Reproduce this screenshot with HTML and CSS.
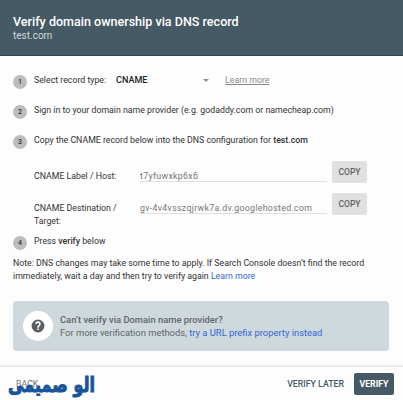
FILE: index.html
```html
<!DOCTYPE html>
<html lang="en">
<head>
<meta charset="UTF-8" />
<meta name="viewport" content="width=device-width, initial-scale=1" />
<title>Verify domain ownership</title>
<link rel="stylesheet" href="styles.css">
</head>
<body>

<div class="dialog">
  <header class="dialog-header">
    <h1>Verify domain ownership via DNS record</h1>
    <p>test.com</p>
  </header>

  <main class="content">
    <ol class="steps">
      <li class="step">
        <span class="num">1</span>
        <span class="record-label">Select record type:</span>
        <span class="record-type">CNAME</span>
        <a class="help-link" href="#">Learn more</a>
      </li>
      <li class="step"><span class="num">2</span><span>Sign in to your domain name provider (e.g. godaddy.com or namecheap.com)</span></li>
      <li class="step"><span class="num">3</span><span>Copy the CNAME record below into the DNS configuration for <b>test.com</b></span></li>
    </ol>

    <div class="record">
      <span class="record-name">CNAME Label / Host:</span>
      <span class="record-value">t7yfuwxkp6x6</span>
      <button class="copy">COPY</button>
    </div>
    <div class="record">
      <span class="record-name">CNAME Destination / Target:</span>
      <span class="record-value">gv-4v4vsszqjrwk7a.dv.googlehosted.com</span>
      <button class="copy">COPY</button>
    </div>

    <div class="step last"><span class="num">4</span><span>Press <b>verify</b> below</span></div>

    <p class="note">Note: DNS changes may take some time to apply. If Search Console doesn’t find the record<br>immediately, wait a day and then try to verify again <a href="#">Learn more</a></p>

    <section class="tip">
      <div class="tip-icon">
        <svg width="14" height="14" viewBox="0 0 24 24"><path fill="#5c5f61" d="M12 1a11 11 0 1 0 0 22 11 11 0 0 0 0-22zm1.4 18h-2.8v-2.8h2.8zm2.3-7.8-1.1 1.1c-.8.8-1.2 1.4-1.2 2.7h-2.8v-.7c0-1.1.4-2.1 1.2-2.9l1.4-1.4c.4-.4.6-.8.6-1.4a1.8 1.8 0 0 0-3.6 0H7.4a4.6 4.6 0 0 1 9.2 0c0 1-.3 1.9-.9 2.6z"/></svg>
      </div>
      <div class="tip-text">
        <b>Can’t verify via Domain name provider?</b>
        <p>For more verification methods, <a href="#">try a URL prefix property instead</a></p>
      </div>
    </section>
  </main>

  <footer class="actions">
    <button class="back">BACK</button>
    <button class="later">VERIFY LATER</button>
    <button class="verify">VERIFY</button>
    <svg class="brand" width="96" height="34" viewBox="0 0 96 34">
      <text x="91" y="25" textLength="87" lengthAdjust="spacingAndGlyphs" direction="rtl">الو صمیمی</text>
    </svg>
  </footer>
</div>

</body>
</html>
```

FILE: styles.css
```css
* {
  box-sizing: border-box;
}

body {
  margin: 0;
  font-family: Roboto, "Liberation Sans", sans-serif;
  font-size: 8.77px;
  line-height: 13px;
  color: #323232;
  background: #fdfdfd;
}

h1, p, ol {
  margin: 0;
  padding: 0;
}

b {
  font-weight: 500;
}

a {
  color: #3367d6;
  text-decoration: none;
}

button {
  border: 0;
  padding: 0;
  font: 500 8.77px Roboto, sans-serif;
  background: none;
}

.dialog {
  height: 400px;
  display: flex;
  flex-direction: column;
  overflow: hidden;
}

.dialog-header {
  height: 56px;
  padding: 14px 13px 0;
  background: #455a64;
  border-bottom: 1px solid #35474f;
  color: #fff;
}

.dialog-header h1 {
  font-size: 12.55px;
  line-height: 15px;
  font-weight: 500;
}

.dialog-header p {
  font-size: 10px;
  line-height: 14px;
  color: #cfd8dc;
}

.content {
  flex: 1;
  padding: 9px 13px 0;
}

.steps {
  list-style: none;
}

.step {
  display: flex;
  align-items: center;
  height: 30.2px;
  gap: 7px;
}

.num {
  width: 14px;
  height: 14px;
  margin-top: 3px;
  flex: none;
  border-radius: 50%;
  background: #bdbdbd;
  font-size: 7px;
  font-weight: 500;
  line-height: 14px;
  text-align: center;
}

.record-type {
  display: flex;
  align-items: center;
  justify-content: space-between;
  width: 93px;
  margin-left: 3px;
  font-size: 9px;
  font-weight: 500;
  color: #212121;
}

.record-type::after {
  content: "";
  border: 3px solid transparent;
  border-top-color: #8e8e8e;
  border-bottom: 0;
}

.help-link {
  margin-left: 9px;
  color: #8a8a8a;
  text-decoration: underline;
}

.record {
  display: grid;
  grid-template-columns: 96px 187px 35px;
  column-gap: 10px;
  height: 32.5px;
  padding-left: 21px;
}

.record-name {
  padding-top: 14px;
}

.record-value {
  height: 26px;
  padding-top: 14px;
  border-bottom: 1px solid #e0e0e0;
  color: #757575;
  letter-spacing: .32px;
}

.copy {
  width: 35px;
  height: 22px;
  margin-top: 5px;
  margin-left: -5px;
  border-radius: 2px;
  background: #e0e0e0;
  color: #616161;
  font-size: 8.5px;
}

.last {
  margin-top: 9px;
  height: 24px;
}

.note {
  margin-top: 3px;
}

.tip {
  display: flex;
  align-items: center;
  gap: 7px;
  width: 376px;
  height: 50px;
  margin-top: 18px;
  padding-left: 10px;
  border-radius: 4px;
  background: #cfd8dc;
  color: #5f6668;
  font-size: 9.4px;
}

.tip-icon {
  display: flex;
  align-items: center;
  justify-content: center;
  width: 30px;
  height: 30px;
  border-radius: 50%;
  background: #fff;
}

.actions {
  position: relative;
  display: flex;
  align-items: center;
  height: 34px;
  padding: 0 9px 0 16px;
  border-top: 1px solid #e3e3e3;
  box-shadow: 0 -1px 1px #f3f3f3;
}

.back {
  margin-right: auto;
  color: #757575;
  font-weight: 400;
}

.later {
  margin-right: 10px;
  color: #455a64;
}

.verify {
  width: 40px;
  height: 22px;
  border-radius: 2px;
  background: #455a64;
  color: #fff;
  font-weight: 700;
}

/* watermark sits over the back button */
.brand {
  position: absolute;
  left: 4px;
  top: 0;
  overflow: visible;
  fill: #17549b;
  stroke: #17549b;
  stroke-width: 1;
  font: bold 21px "DejaVu Sans", sans-serif;
}
```
